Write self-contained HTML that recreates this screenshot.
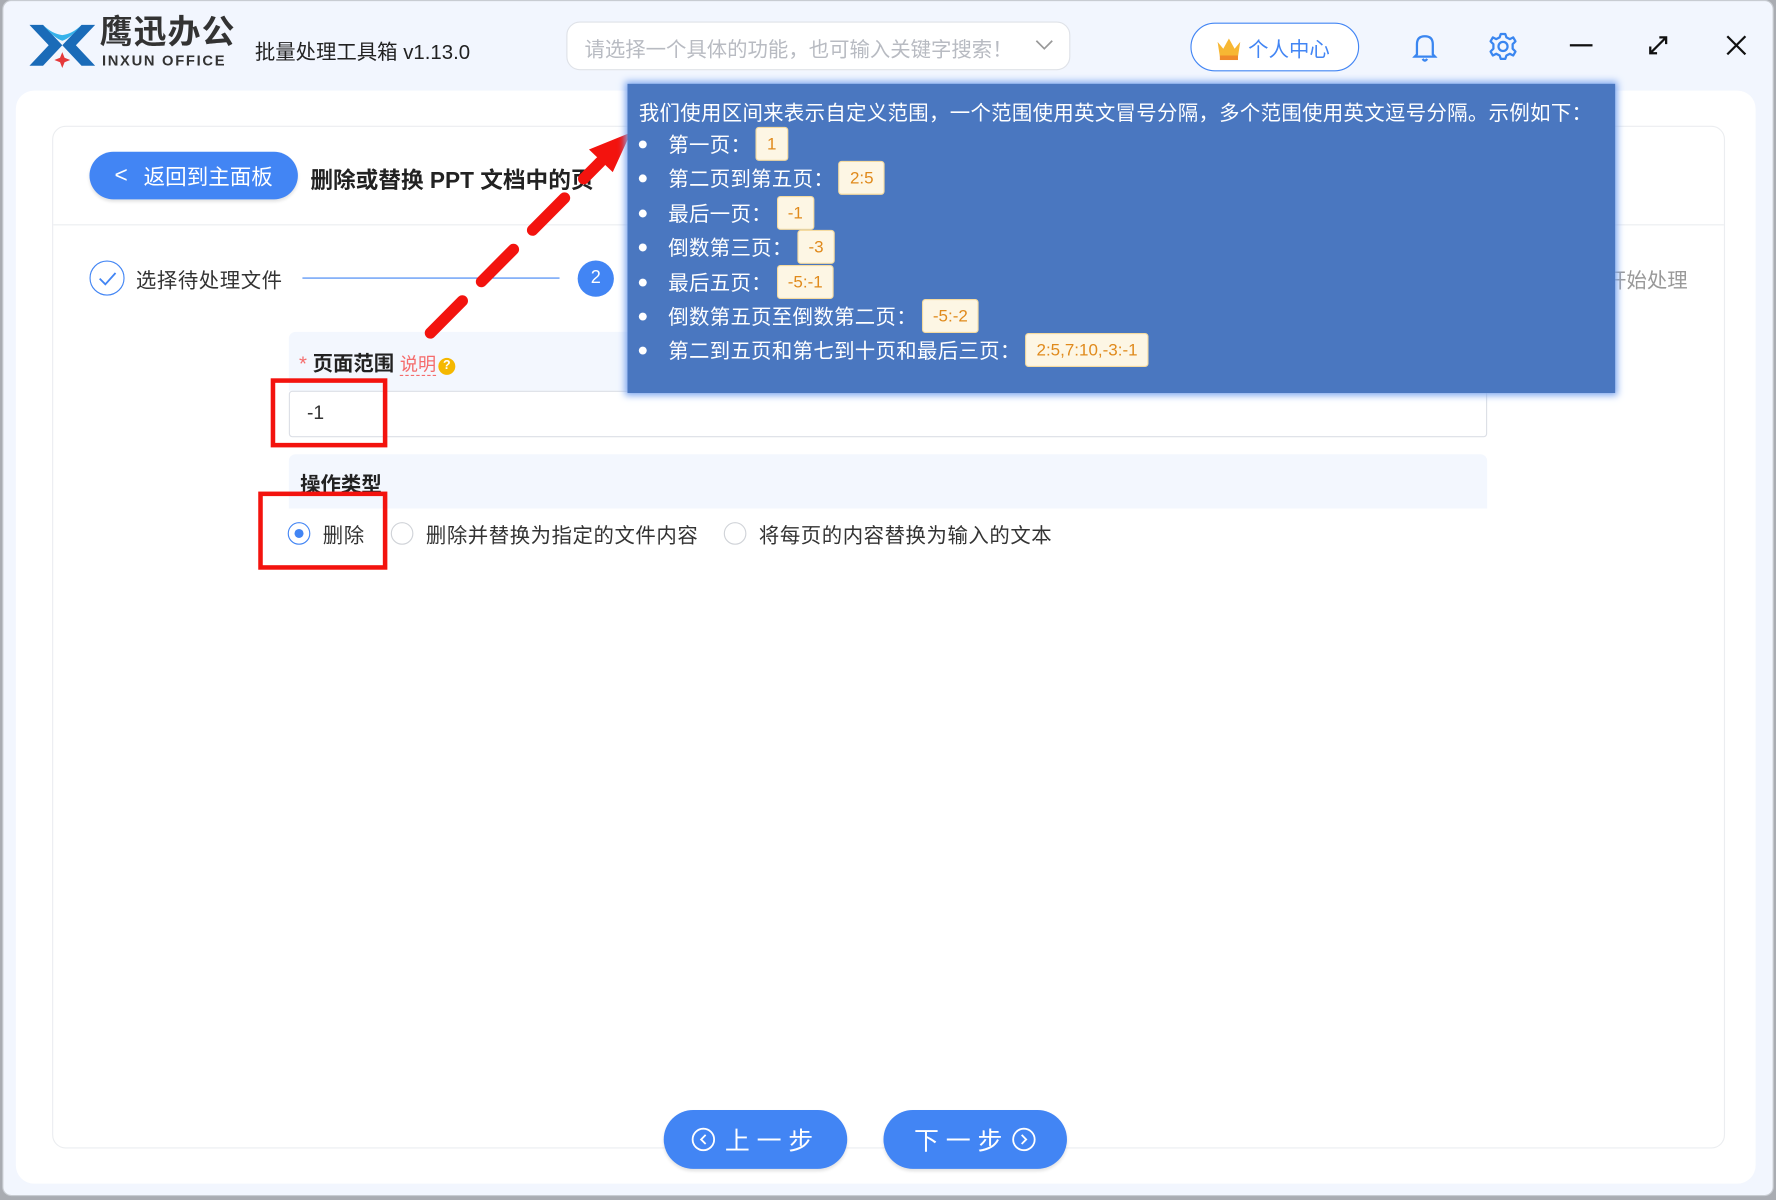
<!DOCTYPE html>
<html><head><meta charset="utf-8"><style>
*{margin:0;padding:0;box-sizing:border-box}
html,body{width:1776px;height:1200px;overflow:hidden;background:#a9acb2}
body{font-family:"Liberation Sans","Noto Sans CJK SC",sans-serif}
#w{position:absolute;left:0;top:0;width:1568px;height:1059px;transform:scale(1.13265);transform-origin:0 0}
.win{position:absolute;left:2px;top:0;width:1564px;height:1056px;background:#f2f6fe;border-radius:8px;border:1px solid #c8ccd2}
.a{position:absolute;white-space:nowrap}
.panel{position:absolute;left:14px;top:80px;width:1536px;height:965px;background:#fff;border-radius:16px}
.card{position:absolute;left:46px;top:111px;width:1477px;height:903px;border:1px solid #ebedf0;border-radius:12px}
.btn{position:absolute;background:#4285f4;color:#fff;border-radius:26px;font-size:22px;letter-spacing:6px;display:flex;align-items:center;justify-content:center;box-shadow:0 2px 3px rgba(0,0,0,.12)}
.tip{position:absolute;left:554px;top:74px;width:872px;height:273px;background:#4a77c0;box-shadow:0 0 6px 2px #7fa8f0;color:#fff;font-size:18px;letter-spacing:0.3px}
.li{position:absolute;left:10px;height:28px;display:flex;align-items:center}
.li .d{width:7px;height:7px;border-radius:50%;background:#fff;margin-right:19px}
.tag{display:inline-block;background:#fdf6e4;border:1px solid #f5dba0;color:#e08a1c;font-size:15px;border-radius:3px;padding:0 9px;height:30px;line-height:30px;margin-left:4px;letter-spacing:0}
.radio{position:absolute;width:20px;height:20px;border-radius:50%;border:1px solid #d0d3d8;background:#fff}
.rb{position:absolute;border:4px solid #f3130e}
.t18{font-size:18px;color:#333;letter-spacing:0.5px}
</style></head><body><div id="w">
<div class="win"></div>
<svg class="a" style="left:24px;top:18px" width="62" height="44" viewBox="0 0 62 44">
<path d="M2 4 L14 4 L31 22 L14 40 L2 40 L19 22 Z" fill="#1a6bb8"/>
<path d="M60 4 L48 4 L31 22 L48 40 L60 40 L43 22 Z" fill="#1a6bb8"/>
<path d="M14 4 Q24 16 31 18 Q38 16 48 4 Q40 12 31 13 Q22 12 14 4Z" fill="#35b2ea"/>
<path d="M31 28 L33 33 L38 35 L33 37 L31 42 L29 37 L24 35 L29 33Z" fill="#e5393b"/>
</svg>
<div class="a" style="left:88px;top:12px;font-size:29px;line-height:34px;font-weight:bold;color:#333;letter-spacing:1px">鹰迅办公</div>
<div class="a" style="left:90px;top:46px;font-size:13px;line-height:15px;font-weight:bold;color:#333;letter-spacing:1.5px">INXUN OFFICE</div>
<div class="a" style="left:225px;top:32px;font-size:18px;color:#222">批量处理工具箱 v1.13.0</div>
<div class="a" style="left:500px;top:19px;width:445px;height:43px;border:1px solid #dfe2e8;border-radius:12px;background:#fff"></div>
<div class="a" style="left:516px;top:30px;font-size:18px;color:#b8bbc2">请选择一个具体的功能，也可输入关键字搜索！</div>
<svg class="a" style="left:914px;top:34px" width="16" height="12"><path d="M1 2 L8 9 L15 2" stroke="#999" stroke-width="1.5" fill="none"/></svg>
<div class="a" style="left:1051px;top:20px;width:149px;height:43px;border:1px solid #4285f4;border-radius:22px;background:#fff"></div>
<svg class="a" style="left:1073px;top:31px" width="24" height="24" viewBox="0 0 24 24"><path d="M2 6 L7 12 L12 3 L17 12 L22 6 L20 19 L4 19Z" fill="#f7b733"/><rect x="4" y="18" width="16" height="4" fill="#f08a2a"/></svg>
<div class="a" style="left:1102px;top:30px;font-size:18px;color:#4285f4">个人中心</div>
<svg class="a" style="left:1247px;top:28px" width="22" height="28" viewBox="0 0 22 28"><path d="M4 20 L4 11 Q4 4 11 4 Q18 4 18 11 L18 20 L20 22 L2 22Z M9 24 Q11 27 13 24" stroke="#3a86f0" stroke-width="2" fill="none"/></svg>
<svg class="a" style="left:1314px;top:28px" width="26" height="26" viewBox="0 0 26 26"><circle cx="13" cy="13" r="4" stroke="#3a86f0" stroke-width="2" fill="none"/><path d="M11 2 L15 2 L16 5 L19 6.5 L22 5 L24 8.5 L21.5 11 L21.5 15 L24 17.5 L22 21 L19 19.5 L16 21 L15 24 L11 24 L10 21 L7 19.5 L4 21 L2 17.5 L4.5 15 L4.5 11 L2 8.5 L4 5 L7 6.5 L10 5Z" stroke="#3a86f0" stroke-width="2" fill="none" stroke-linejoin="round"/></svg>
<div class="a" style="left:1386px;top:39px;width:20px;height:2px;background:#111"></div>
<svg class="a" style="left:1454px;top:30px" width="20" height="20"><path d="M3 17 L17 3 M11 3 L17 3 L17 9 M3 11 L3 17 L9 17" stroke="#111" stroke-width="2" fill="none"/></svg>
<svg class="a" style="left:1523px;top:30px" width="20" height="20"><path d="M2 2 L18 18 M18 2 L2 18" stroke="#111" stroke-width="2"/></svg>

<div class="panel"></div>
<div class="card"></div>
<div class="a" style="left:47px;top:198px;width:1475px;height:1px;background:#ebedf0"></div>
<div class="btn" style="left:79px;top:134px;width:184px;height:42px;font-size:19px;letter-spacing:0"><span style="font-size:20px;margin-right:14px">&lt;</span>返回到主面板</div>
<div class="a" style="left:274px;top:143px;font-size:20px;font-weight:bold;color:#222">删除或替换 PPT 文档中的页</div>
<div class="a" style="left:79px;top:230px;width:31px;height:31px;border-radius:50%;border:1.5px solid #4285f4"></div>
<svg class="a" style="left:86px;top:238px" width="18" height="16"><path d="M2 8 L7 13 L16 3" stroke="#4285f4" stroke-width="1.6" fill="none"/></svg>
<div class="a t18" style="left:120px;top:234px">选择待处理文件</div>
<div class="a" style="left:267px;top:245px;width:227px;height:1px;background:#4285f4"></div>
<div class="a" style="left:510px;top:230px;width:32px;height:32px;border-radius:50%;background:#4285f4;color:#fff;font-size:16px;text-align:center;line-height:32px">2</div>
<div class="a" style="left:1418px;top:234px;font-size:18px;color:#999">开始处理</div>
<div class="a" style="left:255px;top:293px;width:1058px;height:52px;background:#f3f7fe;border-radius:6px 6px 0 0"></div>
<div class="a" style="left:264px;top:307px;font-size:18px;font-weight:bold;color:#222"><span style="color:#f56c6c;font-weight:normal">*</span> 页面范围 <span style="font-size:16px;font-weight:normal;color:#f56c6c;border-bottom:1px dashed #f56c6c">说明</span><span style="display:inline-block;width:15px;height:15px;border-radius:50%;background:#f5b800;color:#fff;font-size:11px;text-align:center;line-height:15px;vertical-align:1px;margin-left:2px">?</span></div>
<div class="a" style="left:255px;top:345px;width:1058px;height:41px;border:1px solid #dcdfe6;border-radius:3px;background:#fff"></div>
<div class="a" style="left:271px;top:355px;font-size:17px;color:#333">-1</div>
<div class="a" style="left:255px;top:401px;width:1058px;height:48px;background:#f3f7fe;border-radius:6px 6px 0 0"></div>
<div class="a" style="left:265px;top:414px;font-size:18px;font-weight:bold;color:#222">操作类型</div>
<div class="radio" style="left:254px;top:461px;border-color:#4285f4"></div>
<div class="a" style="left:260px;top:467px;width:8px;height:8px;border-radius:50%;background:#4285f4"></div>
<div class="a t18" style="left:285px;top:459px">删除</div>
<div class="radio" style="left:345px;top:461px"></div>
<div class="a t18" style="left:376px;top:459px">删除并替换为指定的文件内容</div>
<div class="radio" style="left:639px;top:461px"></div>
<div class="a t18" style="left:670px;top:459px">将每页的内容替换为输入的文本</div>
<div class="rb" style="left:239px;top:334px;width:103px;height:61px"></div>
<div class="rb" style="left:228px;top:434px;width:114px;height:69px"></div>
<div class="btn" style="left:586px;top:980px;width:162px;height:52px"><svg width="22" height="22" style="margin-right:8px"><circle cx="11" cy="11" r="9.5" stroke="#fff" stroke-width="1.6" fill="none"/><path d="M13 7 L9 11 L13 15" stroke="#fff" stroke-width="1.6" fill="none"/></svg>上一步</div>
<div class="btn" style="left:780px;top:980px;width:162px;height:52px">下一步<svg width="22" height="22" style="margin-left:2px"><circle cx="11" cy="11" r="9.5" stroke="#fff" stroke-width="1.6" fill="none"/><path d="M9 7 L13 11 L9 15" stroke="#fff" stroke-width="1.6" fill="none"/></svg></div>
<svg class="a" style="left:0;top:0" width="1568" height="1059"><line x1="380" y1="294" x2="530" y2="143" stroke="#f3130e" stroke-width="10" stroke-linecap="round" stroke-dasharray="40 24"/><path d="M557 117 L520 132 L541 152Z" fill="#f3130e"/></svg>
<div class="tip">
<div class="a" style="left:10px;top:12px">我们使用区间来表示自定义范围，一个范围使用英文冒号分隔，多个范围使用英文逗号分隔。示例如下：</div>
<div class="li" style="top:39px"><span class="d"></span>第一页：<span class="tag">1</span></div>
<div class="li" style="top:69px"><span class="d"></span>第二页到第五页：<span class="tag">2:5</span></div>
<div class="li" style="top:100px"><span class="d"></span>最后一页：<span class="tag">-1</span></div>
<div class="li" style="top:130px"><span class="d"></span>倒数第三页：<span class="tag">-3</span></div>
<div class="li" style="top:161px"><span class="d"></span>最后五页：<span class="tag">-5:-1</span></div>
<div class="li" style="top:191px"><span class="d"></span>倒数第五页至倒数第二页：<span class="tag">-5:-2</span></div>
<div class="li" style="top:221px"><span class="d"></span>第二到五页和第七到十页和最后三页：<span class="tag">2:5,7:10,-3:-1</span></div>
</div>
</div></body></html>
